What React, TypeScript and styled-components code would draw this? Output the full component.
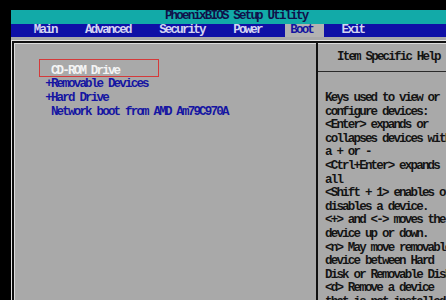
import styled, { createGlobalStyle } from 'styled-components';

const CH = 5.7;
const LH = 13.6;
const FS = 12.5;

const GlobalStyle = createGlobalStyle`
  html, body {
    margin: 0;
    background: #000;
    overflow: hidden;
  }
  body {
    width: 446px;
    height: 300px;
  }
`;

const menu = ['Main', 'Advanced', 'Security', 'Power', 'Boot', 'Exit'];

const bootItems = [
  { prefix: ' ', label: 'CD-ROM Drive', selected: true },
  { prefix: '+', label: 'Removable Devices' },
  { prefix: '+', label: 'Hard Drive' },
  { prefix: ' ', label: 'Network boot from AMD Am79C970A' },
];

const help = [
  'Keys used to view or',
  'configure devices:',
  '<Enter> expands or',
  'collapses devices with',
  'a + or -',
  '<Ctrl+Enter> expands',
  'all',
  '<Shift + 1> enables or',
  'disables a device.',
  '<+> and <-> moves the',
  'device up or down.',
  '<n> May move removable',
  'device between Hard',
  'Disk or Removable Disk',
  '<d> Remove a device',
  'that is not installed.',
];

export default function App() {
  return (
    <>
      <GlobalStyle />
      <Screen>
        <TitleBar>PhoenixBIOS Setup Utility</TitleBar>
        <MenuBar>
          {menu.map((m) => (
            <MenuItem key={m} $active={m === 'Boot'}>
              {m}
            </MenuItem>
          ))}
        </MenuBar>
        <Body>
          <Frame>
            <LeftPanel>
              {bootItems.map((it) => (
                <BootItem key={it.label} $selected={!!it.selected}>
                  {it.prefix}
                  {it.label}
                </BootItem>
              ))}
            </LeftPanel>
            <HelpPanel>
              <HelpHeader>Item Specific Help</HelpHeader>
              <HelpText>
                {help.map((line) => (
                  <HelpLine key={line}>{line}</HelpLine>
                ))}
              </HelpText>
            </HelpPanel>
          </Frame>
        </Body>
      </Screen>
    </>
  );
}

const Screen = styled.div`
  margin: 10px 0 0 11px;
  width: ${80 * CH}px;
  height: 290px;
  display: flex;
  flex-direction: column;
  font-family: 'Liberation Mono', 'DejaVu Sans Mono', monospace;
  font-size: ${FS}px;
  font-weight: bold;
  letter-spacing: ${CH - FS * 0.6}px;
  line-height: ${LH}px;
  white-space: pre;
`;

const TitleBar = styled.div`
  height: ${LH}px;
  background: #12aaa8;
  color: #10104a;
  padding-left: ${27 * CH}px;
`;

const MenuBar = styled.div`
  height: ${LH}px;
  background: #0f10a6;
  display: flex;
  gap: ${2 * CH}px;
  padding-left: ${3 * CH}px;
`;

const MenuItem = styled.span<{ $active: boolean }>`
  padding: 0 ${2 * CH}px 0 ${CH}px;
  background: ${(p) => (p.$active ? '#b2b2b2' : 'transparent')};
  color: ${(p) => (p.$active ? '#1414a0' : '#d4d4f2')};
`;

const Body = styled.div`
  flex: 1;
  background: #a9a9a9;
  padding-top: 3px;
  display: flex;
`;

const Frame = styled.div`
  flex: 1;
  display: flex;
  border-top: 1px solid #e4e4e4;
  border-left: 1px solid #e4e4e4;
  box-shadow: inset 2px 2px 0 #111, inset 3px 3px 0 #dcdcdc;
`;

const LeftPanel = styled.div`
  width: 304px;
  padding: 23.6px 0 0 33.2px;
  box-sizing: border-box;
  display: flex;
  flex-direction: column;
  color: #1515a2;
`;

const BootItem = styled.div<{ $selected: boolean }>`
  position: relative;
  height: ${LH}px;
  color: ${(p) => (p.$selected ? '#f4f4f4' : '#1515a2')};

  &::after {
    content: '';
    display: ${(p) => (p.$selected ? 'block' : 'none')};
    position: absolute;
    left: -6px;
    top: -5.4px;
    width: 120px;
    height: 18px;
    box-sizing: border-box;
    border: 1.5px solid #d43a3a;
  }
`;

const HelpPanel = styled.div`
  flex: 1;
  border-left: 2px solid #111;
  display: flex;
  flex-direction: column;
  color: #141414;
  overflow: hidden;
`;

const HelpHeader = styled.div`
  padding: 10px 0 6.2px 19px;
  line-height: ${LH}px;
  border-bottom: 1px solid #2a2a2a;
`;

const HelpText = styled.div`
  padding: 20px 0 0 7px;
  display: flex;
  flex-direction: column;
`;

const HelpLine = styled.div`
  height: ${LH}px;
`;
